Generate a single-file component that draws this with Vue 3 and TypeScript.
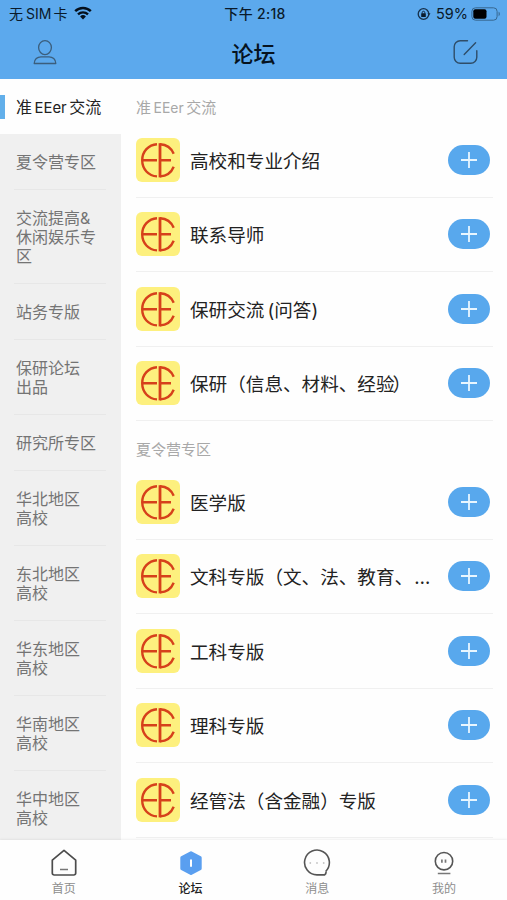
<script setup lang="ts">
import { ref } from 'vue'

interface Section {
  title: string
  boards: string[]
}

const categories: string[][] = [
  ['准EEer交流'],
  ['夏令营专区'],
  ['交流提高&', '休闲娱乐专', '区'],
  ['站务专版'],
  ['保研论坛', '出品'],
  ['研究所专区'],
  ['华北地区', '高校'],
  ['东北地区', '高校'],
  ['华东地区', '高校'],
  ['华南地区', '高校'],
  ['华中地区', '高校'],
]

const sections: Section[] = [
  { title: '准EEer交流', boards: ['高校和专业介绍', '联系导师', '保研交流(问答)', '保研（信息、材料、经验）'] },
  { title: '夏令营专区', boards: ['医学版', '文科专版（文、法、教育、…', '工科专版', '理科专版', '经管法（含金融）专版'] },
]

const active = ref(0)

// Splits a label so Latin runs and punctuation can carry their own spacing.
const runs = (s: string): string[] => s.split(/([A-Za-z]+|\(|\)|…|）$)/).filter(Boolean)
const isLatin = (s: string): boolean => /^[A-Za-z]+$/.test(s)
</script>

<template>
  <div class="screen">
    <header class="header">
      <div class="status">
        <div class="status-left">
          <span class="carrier">无<span class="sim">SIM</span>卡</span>
          <svg class="wifi" width="18" height="14" viewBox="0 0 18 14">
            <path d="M1.2 5.1a11.2 11.2 0 0 1 15.6 0" fill="none" stroke="#05101c" stroke-width="2.5" />
            <path d="M4 8.3a7.2 7.2 0 0 1 10 0" fill="none" stroke="#05101c" stroke-width="2.3" />
            <path d="M9 13.4 6.1 10.4a4.2 4.2 0 0 1 5.8 0z" fill="#05101c" />
          </svg>
        </div>
        <div class="time">下午 2:18</div>
        <div class="status-right">
          <svg width="14" height="14" viewBox="0 0 14 14">
            <circle cx="6.5" cy="7" r="5.3" fill="none" stroke="#16304a" stroke-width="1.3" />
            <path d="m10.4 6.2 3.1 0-1.5 2.4z" fill="#16304a" />
            <rect x="4.2" y="6.2" width="4.6" height="3.7" rx=".5" fill="#0b1b2c" />
            <path d="M5.2 6.5V5.6a1.3 1.3 0 0 1 2.6 0v.9" fill="none" stroke="#0b1b2c" stroke-width=".9" />
          </svg>
          <span class="percent">59%</span>
          <svg class="battery" width="30" height="14" viewBox="0 0 30 14">
            <rect x=".9" y=".8" width="25.2" height="12.4" rx="3.6" fill="none" stroke="#37678f" stroke-width="1" />
            <rect x="2.3" y="2.3" width="13.2" height="9.4" rx="2" fill="#000" />
            <path d="M27.6 4.8c1.6.6 1.6 3.8 0 4.4z" fill="#37678f" />
          </svg>
        </div>
      </div>
      <div class="nav">
        <svg width="24" height="26" viewBox="0 0 24 26" fill="none" stroke="#3b5e7c" stroke-width="1.3">
          <ellipse cx="12" cy="8.6" rx="6.4" ry="7" />
          <path d="M1.2 24.5c0-4.2 3.2-6.7 6.8-6.7h8c3.6 0 6.8 2.5 6.8 6.7z" stroke-linejoin="round" />
        </svg>
        <h1>论坛</h1>
        <svg width="26" height="26" viewBox="0 0 26 26" fill="none" stroke="#2f4d68" stroke-width="1.4" stroke-linecap="round">
          <path d="M14.5 1.8H7.2a6 6 0 0 0-6 6v10.4a6 6 0 0 0 6 6h10.600a6 6 0 0 0 6-6v-6.400" />
          <path d="M11.2 15.4 22.6 3.7" />
        </svg>
      </div>
    </header>

    <main class="content">
      <aside class="sidebar">
        <button
          v-for="(lines, i) in categories"
          :key="i"
          class="category"
          :class="{ active: active === i }"
          @click="active = i"
        >
          <span v-for="line in lines" :key="line" class="line">
            <span v-for="(r, k) in runs(line)" :key="k" :class="{ latin: isLatin(r) }">{{ r }}</span>
          </span>
        </button>
      </aside>

      <div class="boards">
        <section v-for="s in sections" :key="s.title">
          <h2>
            <span v-for="(r, k) in runs(s.title)" :key="k" :class="{ latin: isLatin(r) }">{{ r }}</span>
          </h2>
          <div v-for="b in s.boards" :key="b" class="board">
            <svg class="logo" width="44" height="44" viewBox="0 0 44 44">
              <rect width="44" height="44" rx="6" fill="#fdf07e" />
              <g fill="none" stroke="#d6401b" stroke-width="2.4">
                <path d="M21 6.200C12.500 6.700 6.200 13.500 6.200 22.300S12.500 37.900 21 38.400M6.200 22.300H21" />
                <path d="M24 5.200v34.200" stroke-width="2.8" />
                <path d="M24 6.200c6.700.3 11.400 4 13.700 9.600M24 38.400c6.700-.3 11.400-4 13.700-9.600M24 22.300h11" />
              </g>
            </svg>
            <div class="name">
              <span v-for="(r, k) in runs(b)" :key="k" :class="{ paren: r === '(', more: r === '…', close: r === '）' }">{{ r }}</span>
            </div>
            <button class="add" aria-label="+">
              <svg width="16" height="16" viewBox="0 0 16 16" stroke="#e8f6ff" stroke-width="1.8">
                <path d="M8 0v16M0 8h16" />
              </svg>
            </button>
          </div>
        </section>
      </div>
    </main>

    <footer class="tabs">
      <div class="tab">
        <svg width="30" height="30" viewBox="0 0 30 30" fill="none" stroke="#4c4c4c" stroke-width="1.7">
          <path d="M3.3 12.200 15 2.400l11.700 9.800v13a1.800 1.800 0 0 1-1.800 1.800H5.100a1.800 1.800 0 0 1-1.800-1.800z" stroke-linejoin="round" />
          <path d="M11 21.500h8" stroke="#777" stroke-width="1.5" />
        </svg>
        <span>首页</span>
      </div>
      <div class="tab current">
        <svg width="30" height="30" viewBox="0 0 30 30">
          <path d="M15 5 24 9.800v10.600L15 25.200 6 20.400V9.800z" fill="#5a9ff0" stroke="#5a9ff0" stroke-width="3.4" stroke-linejoin="round" />
          <path d="M15 11.600v7.200" stroke="#fff" stroke-width="2" />
        </svg>
        <span>论坛</span>
      </div>
      <div class="tab">
        <svg width="30" height="30" viewBox="0 0 30 30" fill="none" stroke="#555" stroke-width="1.6">
          <path d="M23.800 23.200A12.400 12.400 0 1 0 15 26.900h7.600q2-1.600 1.200-3.700" stroke-linejoin="round" />
          <g fill="#c4c4c4" stroke="none">
            <circle cx="8.3" cy="15" r=".9" /><circle cx="15" cy="15" r=".9" /><circle cx="21.7" cy="15" r=".9" />
          </g>
        </svg>
        <span>消息</span>
      </div>
      <div class="tab">
        <svg width="30" height="30" viewBox="0 0 30 30" fill="none" stroke="#555" stroke-width="1.6">
          <circle cx="15" cy="13.2" r="8.700" />
          <path d="M8.800 25.500h12.600" stroke="#777" stroke-width="1.5" />
          <path d="M12.900 11.500v3.200M16.500 11.500v3.200" stroke="#777" stroke-width="1.700" />
        </svg>
        <span>我的</span>
      </div>
    </footer>
  </div>
</template>

<style>
body {
  background: #fff;
}
</style>

<style scoped>
.screen {
  width: 507px;
  height: 900px;
  display: flex;
  flex-direction: column;
  overflow: hidden;
  background: #fefefe;
  font-family: Inter, "Noto Sans CJK SC", sans-serif;
  color: #222;
}
button {
  border: 0;
  margin: 0;
  font: inherit;
  color: inherit;
  text-align: left;
}
svg {
  display: block;
  flex: none;
}
.header {
  flex: none;
  height: 79px;
  background: #5ca9ed;
}
.status {
  display: grid;
  grid-template-columns: 1fr auto 1fr;
  align-items: center;
  height: 27px;
  padding: 0 6px 0 9px;
  font-size: 14px;
  color: #0a1a2a;
}
.status-left,
.status-right {
  display: flex;
  align-items: center;
}
.status-left,
.time {
  margin-top: -2px;
}
.sim {
  margin: 0 2px 0 3px;
}
.wifi {
  margin-left: 7px;
}
.time {
  font-weight: 500;
  letter-spacing: 0.3px;
}
.status-right {
  justify-content: flex-end;
}
.percent {
  margin: 0 3px 0 5px;
  font-size: 14.5px;
}
.nav {
  display: flex;
  align-items: center;
  justify-content: space-between;
  height: 50px;
  padding: 0 28px 0 33px;
}
h1 {
  margin: 0 3px 1px 0;
  font-size: 22px;
  font-weight: 500;
  color: #06131f;
}
.content {
  flex: 1;
  min-height: 0;
  display: flex;
  overflow: hidden;
}
.sidebar {
  flex: none;
  width: 121px;
  background: #f0f0f0;
}
.category {
  position: relative;
  display: block;
  width: 100%;
  padding: 19px 0 18.2px 16px;
  background: transparent;
  font-size: 16px;
  line-height: 18.9px;
  color: #747474;
}
.category::after {
  content: "";
  position: absolute;
  left: 14px;
  right: 15px;
  bottom: 0;
  height: 1px;
  background: #e7e7e7;
}
.category.active {
  height: 55px;
  background: #fefefe;
  color: #222;
}
.category.active::after {
  display: none;
}
.category.active::before {
  content: "";
  position: absolute;
  left: 0;
  top: 16px;
  width: 5px;
  height: 24px;
  background: #62afea;
}
.line {
  display: block;
  white-space: nowrap;
}
.latin {
  margin: 0 2.5px;
  font-size: 0.93em;
}
.boards {
  flex: 1;
  min-width: 0;
  padding: 0 14px 0 15px;
}
h2 {
  margin: 0;
  height: 44px;
  padding-top: 18px;
  box-sizing: border-box;
  font-size: 15px;
  line-height: 21px;
  font-weight: 400;
  color: #a8a8a8;
}
section + section h2 {
  height: 44px;
  padding-top: 17.5px;
}
.board {
  display: flex;
  align-items: center;
  height: 74.5px;
  box-sizing: border-box;
  border-bottom: 1px solid #f0f0f0;
  padding-right: 3px;
}
.name {
  flex: 1;
  min-width: 0;
  margin: 1.5px 0 0 10px;
  white-space: nowrap;
  font-size: 18.6px;
  line-height: 28px;
}
.paren {
  margin-left: 3px;
}
.close {
  margin-left: -2px;
}
.more {
  margin-left: 1px;
  letter-spacing: 0;
}
.add {
  flex: none;
  display: flex;
  align-items: center;
  justify-content: center;
  width: 42px;
  height: 30px;
  padding: 0;
  border-radius: 15px;
  background: #58a8ed;
}
.tabs {
  flex: none;
  display: grid;
  grid-template-columns: repeat(4, 1fr);
  height: 60px;
  background: #fefefe;
  box-shadow: 0 -1px 2px rgba(0, 0, 0, 0.06);
}
.tab {
  display: flex;
  flex-direction: column;
  align-items: center;
  padding: 8px 0 0 1px;
  font-size: 12px;
  line-height: 21px;
  color: #8d8d8d;
}
.tab.current {
  color: #222;
  font-weight: 500;
}
</style>
